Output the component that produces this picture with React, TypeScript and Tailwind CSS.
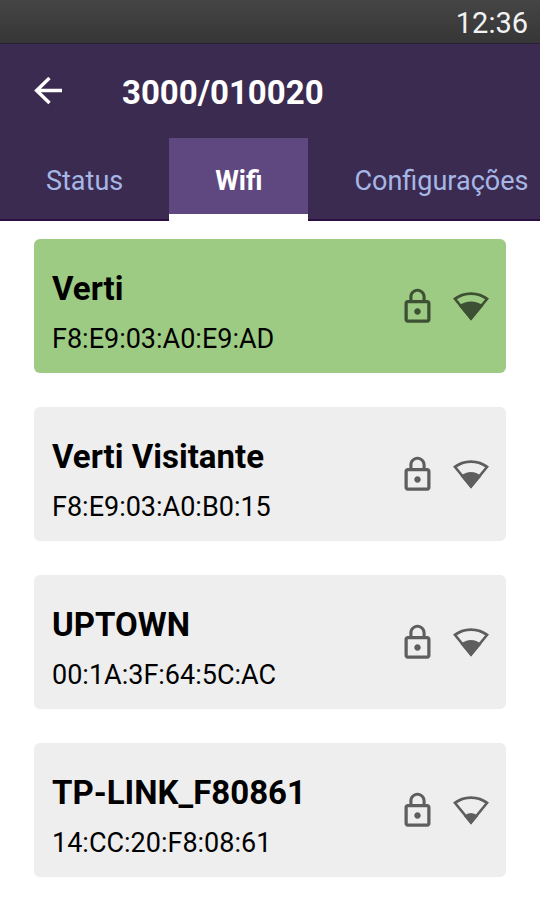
import { useState } from "react";

type Signal = "full" | "medium" | "low";

const tabs = ["Status", "Wifi", "Configurações"];

const networks: { name: string; mac: string; signal: Signal }[] = [
  { name: "Verti", mac: "F8:E9:03:A0:E9:AD", signal: "full" },
  { name: "Verti Visitante", mac: "F8:E9:03:A0:B0:15", signal: "medium" },
  { name: "UPTOWN", mac: "00:1A:3F:64:5C:AC", signal: "medium" },
  { name: "TP-LINK_F80861", mac: "14:CC:20:F8:08:61", signal: "low" },
];

const signalPaths: Record<Signal, string> = {
  full: "M18 28.6L5.6 13.4Q18 5.4 30.4 13.4Z",
  medium: "M18 28.6L7.6 15.9Q18 8 28.4 15.9Z",
  low: "M18 28.6L10.9 19.9Q18 14 25.1 19.9Z",
};

const BackIcon = () => (
  <svg
    viewBox="0 0 28 28"
    className="size-7"
    fill="none"
    stroke="currentColor"
    strokeWidth="3.4"
    aria-hidden="true"
  >
    <path d="M28 13.5H2.5M15.5 1L2.6 13.5L15.5 26" />
  </svg>
);

const LockIcon = () => (
  <svg
    viewBox="0 0 24 24"
    className="size-[39px] opacity-60"
    fill="currentColor"
    aria-hidden="true"
  >
    <path d="M12 17c1.1 0 2-.9 2-2s-.9-2-2-2-2 .9-2 2 .9 2 2 2zm6-9h-1V6c0-2.76-2.24-5-5-5S7 3.24 7 6v2H6c-1.1 0-2 .9-2 2v10c0 1.1.9 2 2 2h12c1.1 0 2-.9 2-2V10c0-1.1-.9-2-2-2zM8.9 6c0-1.71 1.39-3.1 3.1-3.1s3.1 1.39 3.1 3.1v2H8.9V6zM18 20H6V10h12v10z" />
  </svg>
);

const SignalIcon = ({ signal }: { signal: Signal }) => (
  <svg
    viewBox="0 0 36 29"
    className="h-[29px] w-9 opacity-60"
    fill="currentColor"
    aria-hidden="true"
  >
    <path
      fillRule="evenodd"
      d="M18 28.6L0 6.6A28.4 28.4 0 0 1 36 6.6ZM18 24.5L32.1 7.2A25.6 25.6 0 0 0 3.9 7.2Z"
    />
    <path d={signalPaths[signal]} />
  </svg>
);

const App = () => {
  const [activeTab, setActiveTab] = useState("Wifi");
  const [selected, setSelected] = useState("Verti");

  return (
    <div className="min-h-screen bg-white font-[Roboto,sans-serif] text-black">
      <div className="flex h-[43px] items-center justify-end bg-linear-to-b from-[#454545] to-[#363636] px-3 pt-1 text-[29px] leading-none text-[#f2f2f2]">
        12:36
      </div>

      <header className="border-t border-[#2c2038] bg-[#3c2b51] text-white">
        <div className="flex h-[94px] items-center gap-[60px] px-[34px]">
          <button type="button" aria-label="Voltar">
            <BackIcon />
          </button>
          <h1 className="pt-1 text-[33px] font-bold">3000/010020</h1>
        </div>
        <nav className="flex overflow-hidden">
          {tabs.map((tab) => (
            <button
              type="button"
              key={tab}
              onClick={() => setActiveTab(tab)}
              className={`h-[83px] shrink-0 px-[46px] text-[27px] ${
                tab === activeTab
                  ? "border-b-[7px] border-white bg-[#5f4780] pt-2.5 font-bold text-white"
                  : "border-b-2 border-[#2a0f42] pt-1.5 text-[#a6b7e6]"
              }`}
            >
              {tab}
            </button>
          ))}
        </nav>
      </header>

      <ul className="flex flex-col gap-[34px] px-[34px] pt-[18px] pb-6">
        {networks.map((network) => (
          <li key={network.name}>
            <button
              type="button"
              onClick={() => setSelected(network.name)}
              className={`flex w-full items-center justify-between rounded-md pr-[17px] pl-[18px] text-left ${
                network.name === selected ? "bg-[#9dcb83]" : "bg-[#eeeeee]"
              }`}
            >
              <span className="flex flex-col pt-[25px] pb-[9px]">
                <span className="text-[33px] leading-[50px] font-bold">
                  {network.name}
                </span>
                <span className="text-[27px] leading-[50px]">
                  {network.mac}
                </span>
              </span>
              <span className="flex shrink-0 items-center gap-4">
                <LockIcon />
                <SignalIcon signal={network.signal} />
              </span>
            </button>
          </li>
        ))}
      </ul>
    </div>
  );
};

export default App;
